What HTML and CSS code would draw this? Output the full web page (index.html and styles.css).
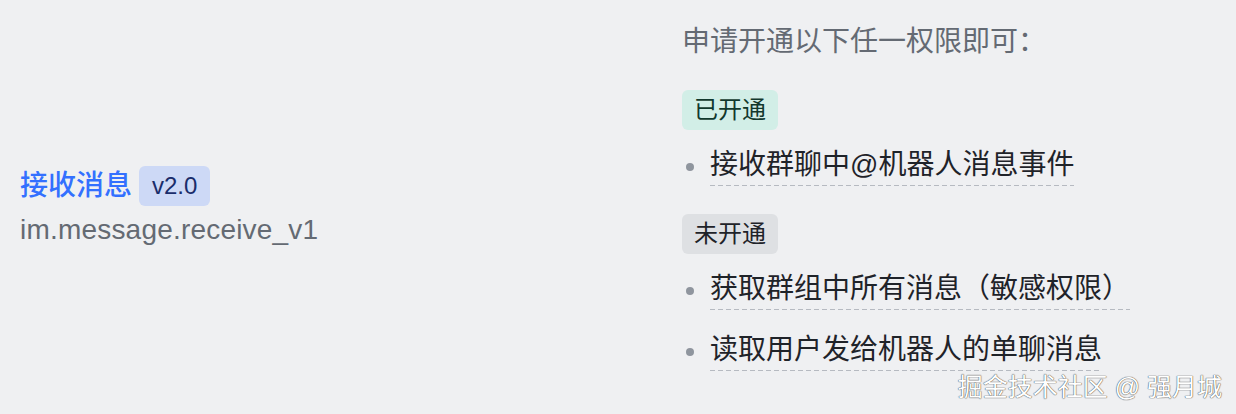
FILE: index.html
```html
<!DOCTYPE html>
<html lang="zh-CN">
<head>
    <meta charset="UTF-8">
    <meta name="viewport" content="width=device-width, initial-scale=1.0">
    <title>权限</title>
    <link rel="stylesheet" href="styles.css">
</head>
<body>
    <div class="row">
        <div class="event">
            <div class="event-title">
                <span class="event-name">接收消息</span>
                <span class="version">v2.0</span>
            </div>
            <div class="event-key">im.message.receive_v1</div>
        </div>
        <div class="scopes">
            <p class="hint">申请开通以下任一权限即可：</p>
            <div class="tag tag-on">已开通</div>
            <ul class="scope-list">
                <li><span class="scope">接收群聊中@机器人消息事件</span></li>
            </ul>
            <div class="tag tag-off">未开通</div>
            <ul class="scope-list">
                <li><span class="scope">获取群组中所有消息（敏感权限）</span></li>
                <li><span class="scope">读取用户发给机器人的单聊消息</span></li>
            </ul>
        </div>
    </div>
    <div class="watermark">掘金技术社区 @ 强月城</div>
</body>
</html>
```

FILE: styles.css
```css
*{
    padding: 0;
    margin: 0;
    box-sizing: border-box;
    font-family: "Liberation Sans", "Noto Sans CJK SC", sans-serif;
}
body{
    background-color: #eff0f2;
    width: 1236px;
    height: 414px;
    overflow: hidden;
    position: relative;
}
.row{
    display: grid;
    grid-template-columns: 682px 1fr;
    height: 414px;
}
.event{
    align-self: center;
    padding-left: 20px;
}
.event-title{
    display: flex;
    align-items: center;
    gap: 7px;
}
.event-name{
    font-size: 28px;
    line-height: 40px;
    font-weight: 500;
    color: #3370ff;
}
.version{
    font-size: 24px;
    line-height: 40px;
    padding: 0 13px;
    border-radius: 6px;
    background-color: #cdd9f6;
    color: #1a2d6b;
}
.event-key{
    margin-top: 6px;
    font-size: 28px;
    line-height: 36px;
    letter-spacing: 0.2px;
    color: #646a73;
}
.scopes{
    padding-top: 22px;
}
.hint{
    font-size: 28px;
    line-height: 40px;
    color: #646a73;
}
.tag{
    display: inline-block;
    font-size: 24px;
    line-height: 40px;
    padding: 0 12px;
    border-radius: 6px;
    color: #1f2329;
}
.tag-on{
    margin-top: 28px;
    background-color: #d2eee7;
    color: #12382d;
}
.tag-off{
    margin-top: 28px;
    background-color: #dee0e3;
}
.scope-list{
    list-style: none;
    margin-top: 17px;
}
.scope-list li{
    display: flex;
    align-items: center;
    gap: 16px;
    padding-left: 4px;
}
.scope-list li + li{
    margin-top: 22px;
}
.scope-list li::before{
    content: "";
    width: 8px;
    height: 8px;
    border-radius: 50%;
    background-color: #8f959e;
}
.scope{
    font-size: 28px;
    line-height: 36px;
    padding-bottom: 3px;
    color: #1f2329;
    background-image: repeating-linear-gradient(to right, #b6bac1 0 5px, transparent 5px 8px);
    background-size: 100% 1px;
    background-position: left bottom;
    background-repeat: no-repeat;
}
.watermark{
    position: absolute;
    right: 14px;
    bottom: 12px;
    font-size: 25px;
    line-height: 30px;
    color: #fff;
    text-shadow: 0 0 1px #444, 0 0 1px #444;
}
```
